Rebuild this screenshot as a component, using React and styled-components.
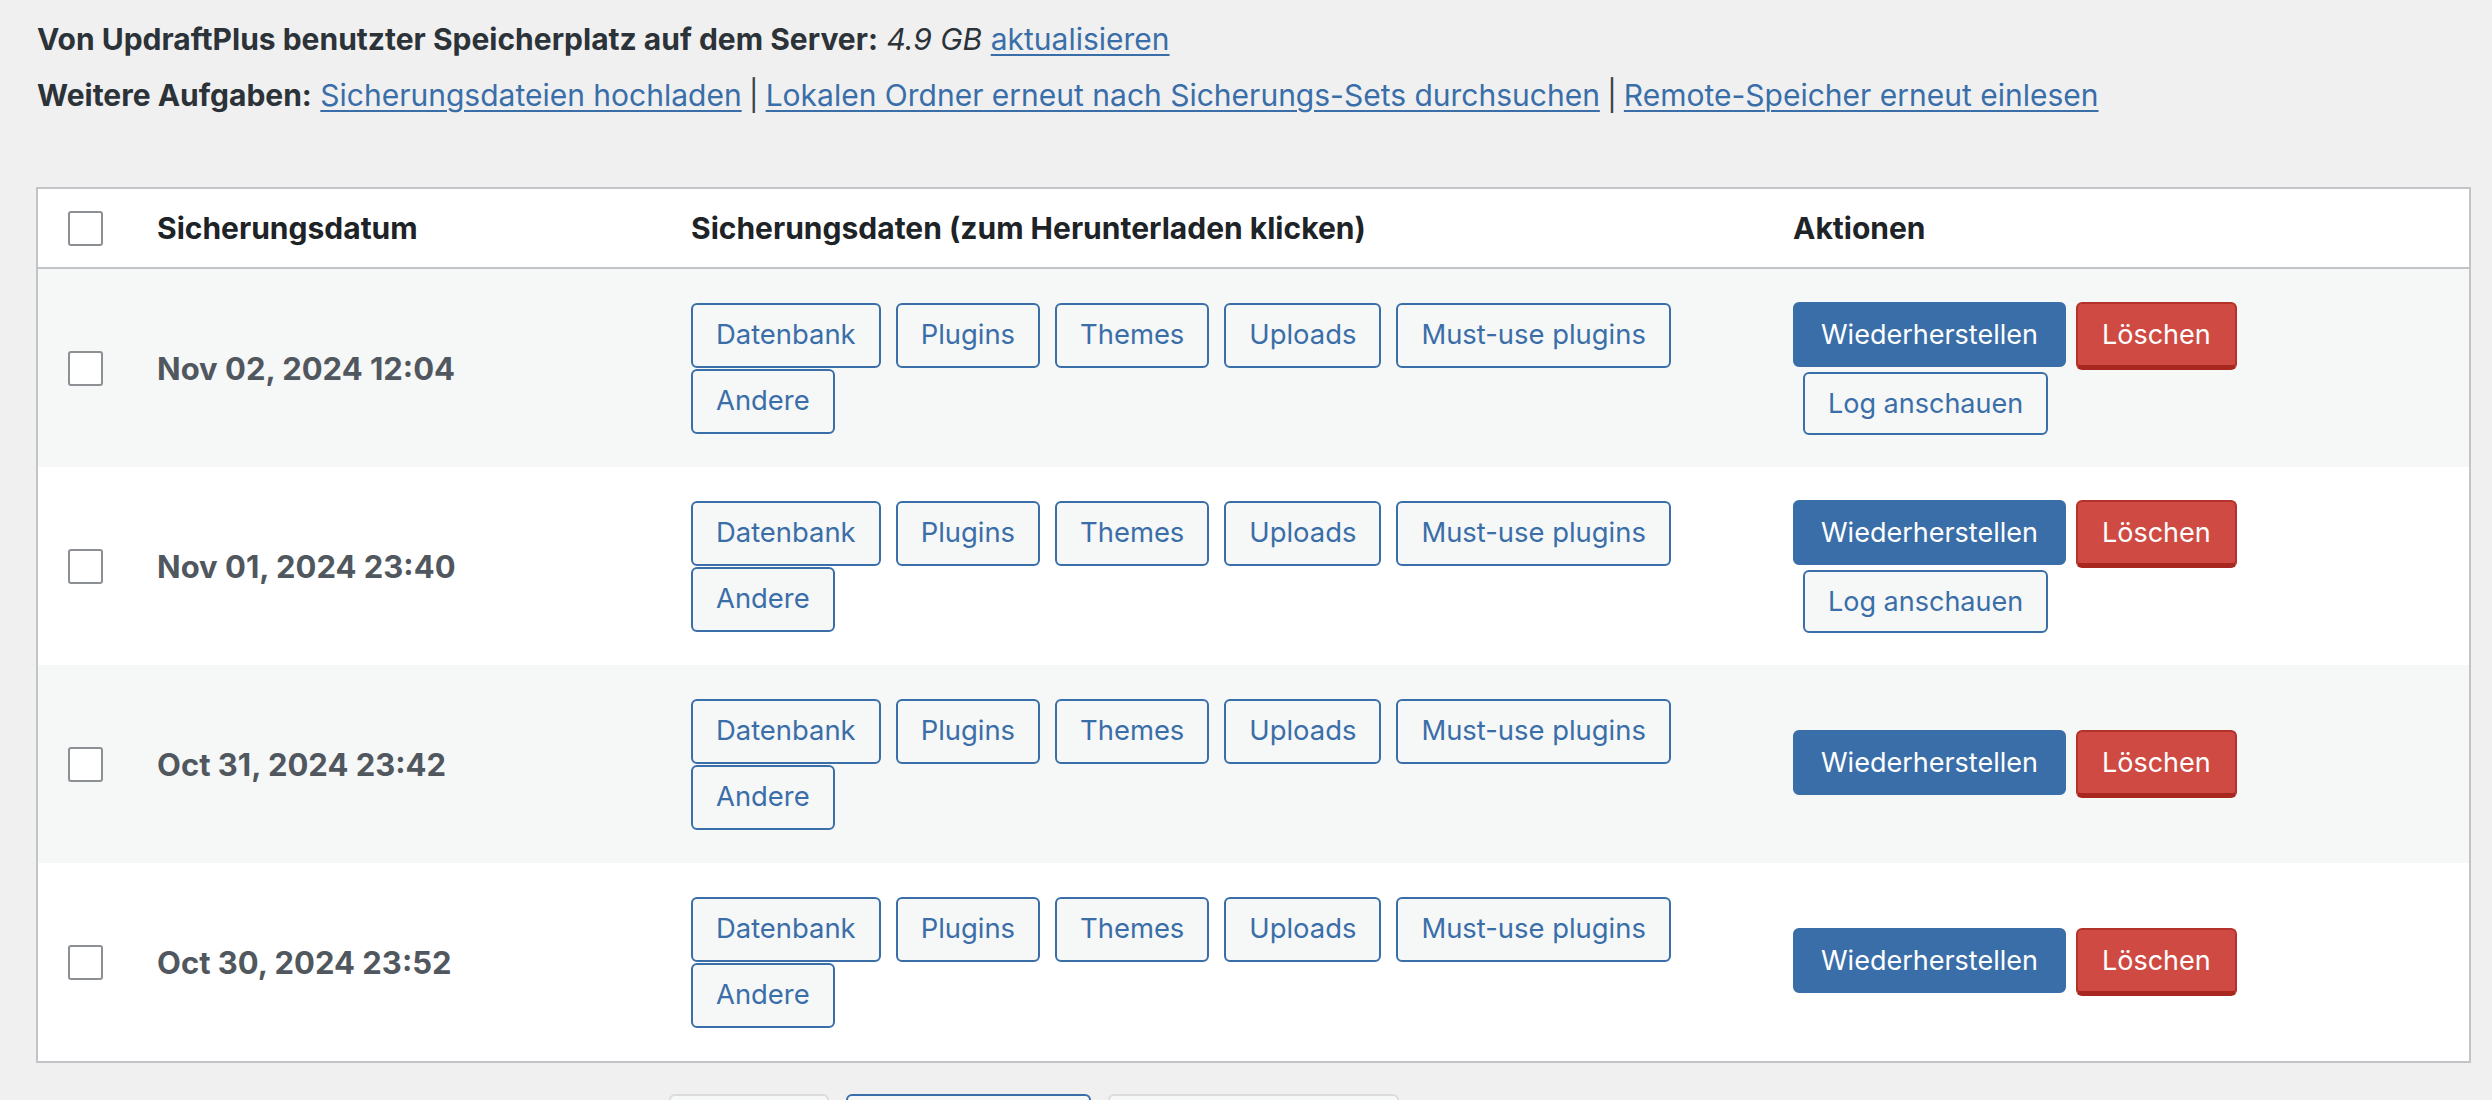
import React from "react";
import styled, { createGlobalStyle, css } from "styled-components";

const GlobalStyle = createGlobalStyle`
  body {
    margin: 0;
    background: #f0f0f1;
    font-family: Inter, "Noto Sans", "Liberation Sans", sans-serif;
    color: #2c3338;
  }
`;

const Page = styled.div`
  padding: 18px 21px 0 36px;
`;

const InfoLine = styled.p`
  margin: 0 0 14px 1px;
  font-size: 30px;
  line-height: 42px;
  color: #2c3338;

  strong {
    font-weight: 700;
  }

  em {
    font-style: italic;
  }
`;

const TextLink = styled.a`
  color: #3a6ea8;
  text-decoration: underline;
  text-decoration-thickness: 2px;
  text-underline-offset: 4px;
  cursor: pointer;
`;

const Sep = styled.span`
  margin: 0 7px;
  color: #3c434a;
`;

const Table = styled.div`
  margin-top: 71px;
  background: #fff;
  border: 2px solid #c3c4c7;
`;

const columns = css`
  display: grid;
  grid-template-columns: 119px 534px 1102px 1fr;
  align-items: center;
`;

const HeadRow = styled.div`
  ${columns}
  height: 78px;
  border-bottom: 2px solid #c3c4c7;
  font-size: 30px;
  font-weight: 700;
  color: #1d2327;
`;

const Row = styled.div`
  ${columns}
  min-height: 198px;
  background: ${(p) => (p.$striped ? "#f6f7f7" : "#fff")};
`;

const CheckCell = styled.div`
  padding-left: 30px;
  display: flex;
  align-items: center;
`;

const Check = styled.input.attrs({ type: "checkbox" })`
  appearance: none;
  margin: 0;
  width: 35px;
  height: 35px;
  border: 2px solid #8c8f94;
  border-radius: 3px;
  background: #fff;
  box-sizing: border-box;
`;

const DateCell = styled.div`
  font-size: 31px;
  font-weight: 700;
  color: #50575e;
`;

const FileCell = styled.div`
  display: flex;
  flex-wrap: wrap;
  column-gap: 15px;
  row-gap: 1px;
  padding-right: 20px;
`;

const ActionCell = styled.div`
  display: flex;
  flex-direction: column;
  align-items: flex-start;
`;

const ActionLine = styled.div`
  display: flex;
  gap: 10px;
  align-items: flex-start;
`;

const Button = styled.button`
  box-sizing: border-box;
  height: 65px;
  padding: 0 23px;
  border-radius: 6px;
  font-family: inherit;
  font-size: 27.4px;
  line-height: 1;
  white-space: nowrap;
  cursor: pointer;

  ${(p) =>
    p.$variant === "primary" &&
    css`
      padding: 0 26px;
      font-size: 27px;
      background: #3a6ea8;
      border: 2px solid #3a6ea8;
      color: #fff;
    `}

  ${(p) =>
    p.$variant === "danger" &&
    css`
      height: 68px;
      padding: 0 24px;
      font-size: 27px;
      background: #cf4a42;
      border: 2px solid #b3322a;
      border-bottom: 5px solid #a8271e;
      color: #fff;
    `}

  ${(p) =>
    (!p.$variant || p.$variant === "secondary") &&
    css`
      background: #f6f7f7;
      border: 2px solid #3a6ea8;
      color: #3a6ea8;
    `}

  ${(p) =>
    p.$variant === "muted" &&
    css`
      background: #f6f7f7;
      border: 2px solid #dcdcde;
      color: #a7aaad;
    `}
`;

const LogButton = styled(Button)`
  height: 63px;
  margin: 2px 0 0 10px;
  font-size: 27px;
`;

const BottomBar = styled.div`
  display: flex;
  gap: 17px;
  margin-top: 31px;
  padding-left: 633px;
`;

const parts = ["Datenbank", "Plugins", "Themes", "Uploads", "Must-use plugins", "Andere"];

const backups = [
  { date: "Nov 02, 2024 12:04", log: true },
  { date: "Nov 01, 2024 23:40", log: true },
  { date: "Oct 31, 2024 23:42", log: false },
  { date: "Oct 30, 2024 23:52", log: false },
];

export default function App() {
  return (
    <Page>
      <GlobalStyle />
      <InfoLine>
        <strong>Von UpdraftPlus benutzter Speicherplatz auf dem Server:</strong>{" "}
        <em>4.9 GB</em> <TextLink>aktualisieren</TextLink>
      </InfoLine>
      <InfoLine>
        <strong>Weitere Aufgaben:</strong>{" "}
        <TextLink>Sicherungsdateien hochladen</TextLink>
        <Sep>|</Sep>
        <TextLink>Lokalen Ordner erneut nach Sicherungs-Sets durchsuchen</TextLink>
        <Sep>|</Sep>
        <TextLink>Remote-Speicher erneut einlesen</TextLink>
      </InfoLine>

      <Table>
        <HeadRow>
          <CheckCell>
            <Check />
          </CheckCell>
          <div>Sicherungsdatum</div>
          <div>Sicherungsdaten (zum Herunterladen klicken)</div>
          <div>Aktionen</div>
        </HeadRow>
        {backups.map((b, i) => (
          <Row key={b.date} $striped={i % 2 === 0}>
            <CheckCell>
              <Check />
            </CheckCell>
            <DateCell>{b.date}</DateCell>
            <FileCell>
              {parts.map((p) => (
                <Button key={p}>{p}</Button>
              ))}
            </FileCell>
            <ActionCell>
              <ActionLine>
                <Button $variant="primary">Wiederherstellen</Button>
                <Button $variant="danger">Löschen</Button>
              </ActionLine>
              {b.log && <LogButton>Log anschauen</LogButton>}
            </ActionCell>
          </Row>
        ))}
      </Table>

      <BottomBar>
        <Button $variant="muted">Löschen</Button>
        <Button>Alle auswählen</Button>
        <Button $variant="muted">Auswahl aufheben</Button>
      </BottomBar>
    </Page>
  );
}
